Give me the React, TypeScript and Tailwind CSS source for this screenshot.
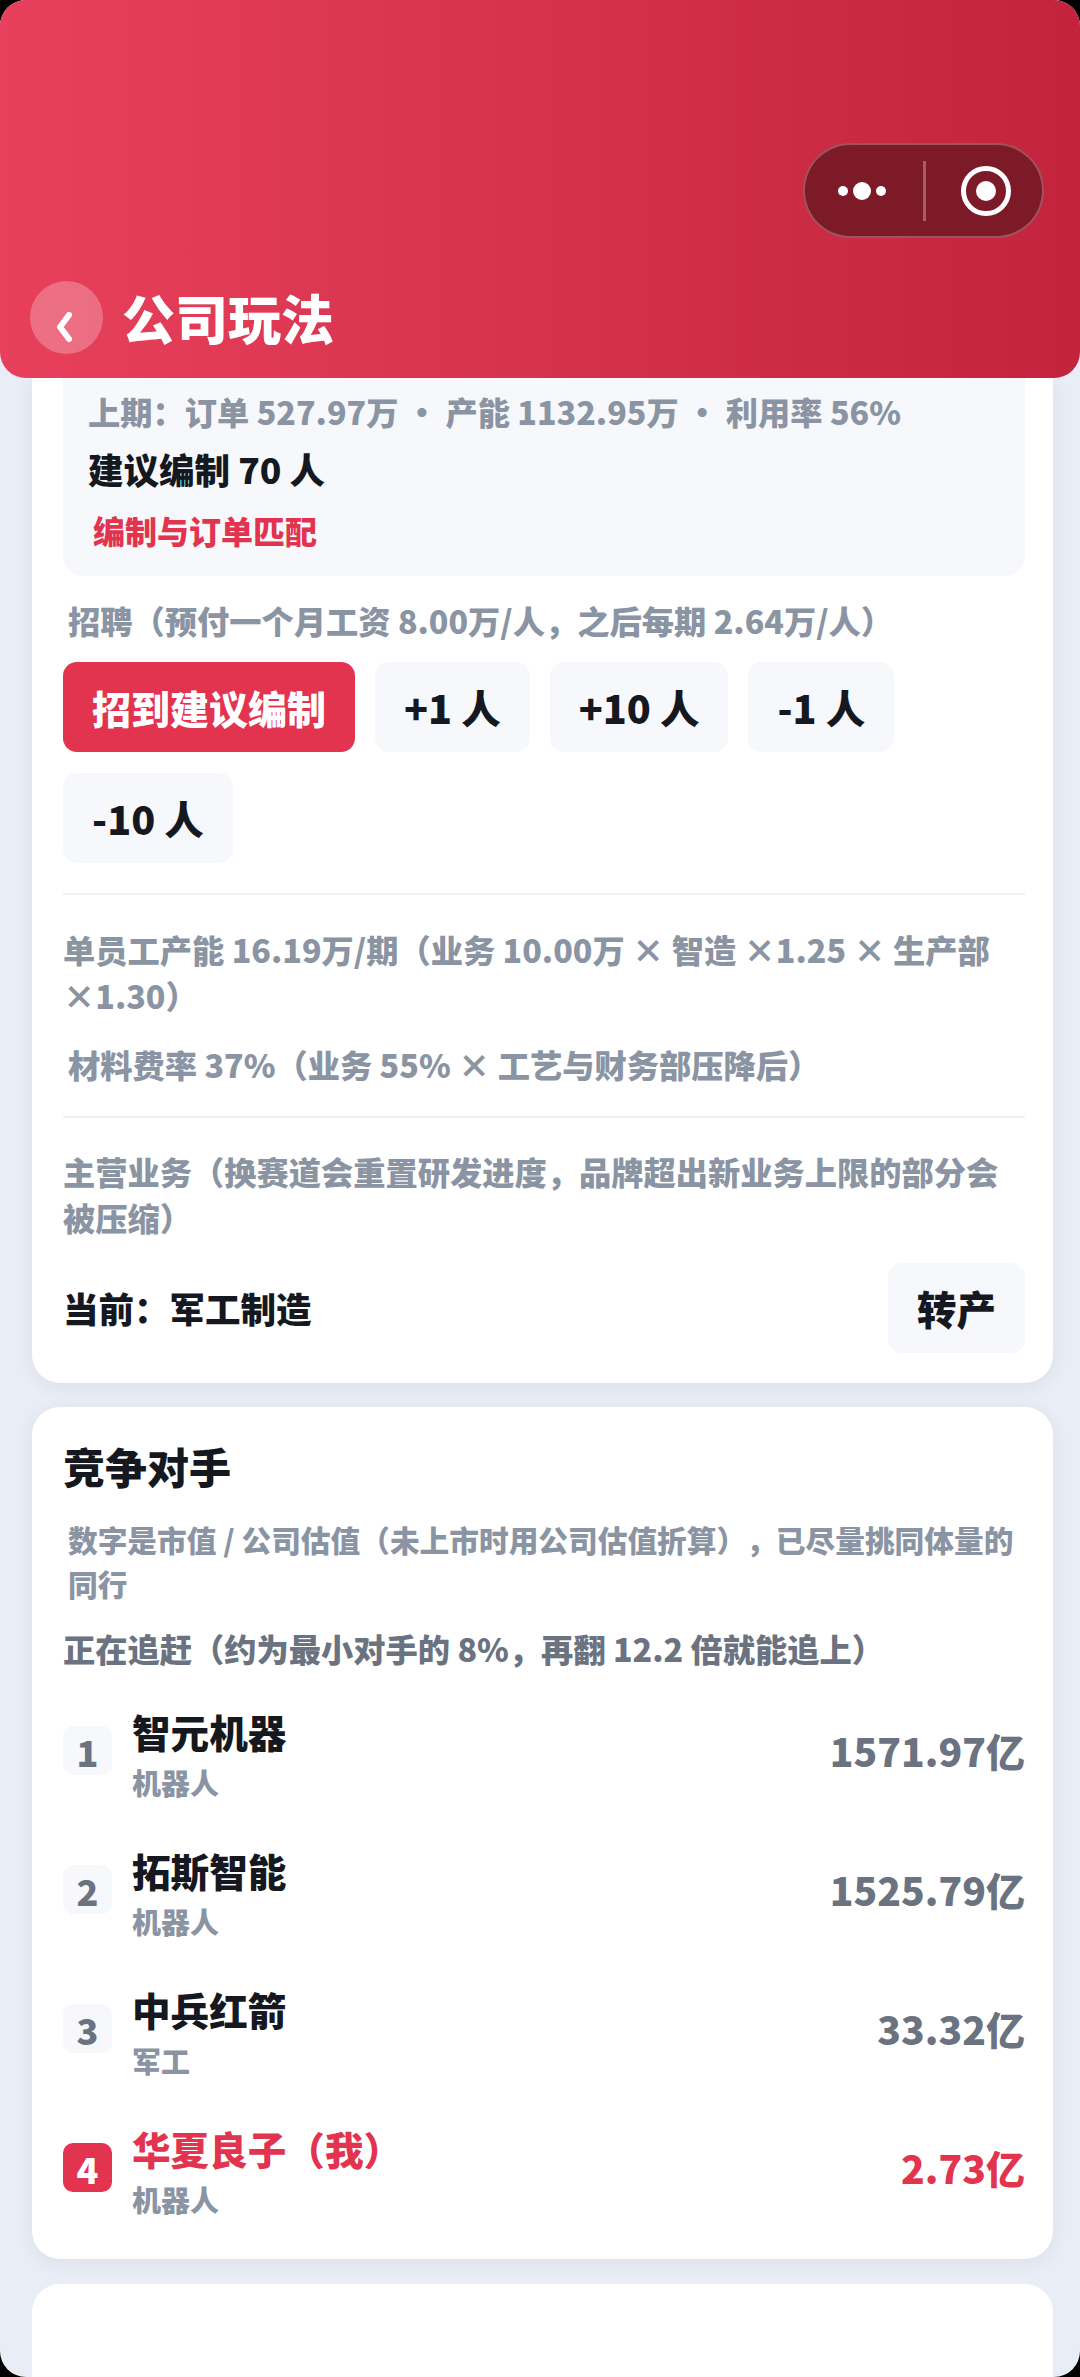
import React from 'react';

const font = { fontFamily: '"Noto Sans CJK SC", "Noto Sans", sans-serif' };

const rivals = [
  { rank: 1, name: '智元机器', kind: '机器人', value: '1571.97亿' },
  { rank: 2, name: '拓斯智能', kind: '机器人', value: '1525.79亿' },
  { rank: 3, name: '中兵红箭', kind: '军工', value: '33.32亿' },
  { rank: 4, name: '华夏良子（我）', kind: '机器人', value: '2.73亿', me: true },
];

const Btn = ({ children, primary = false }: { children: React.ReactNode; primary?: boolean }) => (
  <div
    className={`h-[90px] flex items-center rounded-[14px] font-black whitespace-nowrap ${
      primary ? 'px-[29px] text-[39px] bg-[#e2334f] text-white' : 'px-[29px] text-[39.5px] bg-[#f7f8fc] text-[#15181e]'
    }`}
  >
    {children}
  </div>
);

const Header = () => (
  <header className="relative z-10 shrink-0 h-[378px] rounded-b-[26px] bg-gradient-to-r from-[#e8405c] to-[#c3233c] flex items-end pb-[24px] pl-[30px]">
    <div className="w-[73px] h-[73px] rounded-full bg-white/25 flex items-center justify-center">
      <svg width="20" height="32" viewBox="0 0 20 32" className="mt-[18px] -ml-[4px]" fill="none">
        <polyline points="14,4 5,16 14,28" stroke="#fff" strokeWidth="6" strokeLinejoin="round" strokeLinecap="round" />
      </svg>
    </div>
    <h1 className="ml-[19px] text-[53px] leading-[73px] font-black text-white">公司玩法</h1>
    <div className="absolute left-[803px] top-[143px] w-[241px] h-[95px] rounded-full bg-[#7c1a28] border-2 border-white/25 flex items-center">
      <div className="w-[118px] flex items-center justify-center gap-[5px] pr-[4px]">
        <span className="w-[10px] h-[10px] rounded-full bg-white" />
        <span className="w-[18px] h-[18px] rounded-full bg-white" />
        <span className="w-[10px] h-[10px] rounded-full bg-white" />
      </div>
      <div className="w-[3px] h-[60px] bg-white/30" />
      <div className="flex-1 flex items-center justify-center pl-[4px]">
        <div className="w-[50px] h-[50px] rounded-full border-[5px] border-white flex items-center justify-center">
          <span className="w-[20px] h-[20px] rounded-full bg-white" />
        </div>
      </div>
    </div>
  </header>
);

const CompanyCard = () => (
  <section className="bg-white rounded-b-[28px] pl-[31px] pr-[28px] pb-[30px] shadow-[0_4px_16px_rgba(90,105,140,0.10)]">
    <div className="bg-[#f7f8fc] rounded-b-[20px] h-[198px] px-[25px] pt-[9px]">
      <p className="text-[32.25px] leading-[48px] font-black text-[#8a94a3]">上期：订单 527.97万 · 产能 1132.95万 · 利用率 56%</p>
      <p className="mt-[8px] text-[35.5px] leading-[52px] font-black text-[#15181e]">建议编制 70 人</p>
      <p className="mt-[12px] ml-[5px] text-[32px] leading-[46px] font-black text-[#e2334f]">编制与订单匹配</p>
    </div>
    <p className="mt-[21px] ml-[5px] text-[32.25px] leading-[46px] font-black text-[#8a94a3]">招聘（预付一个月工资 8.00万/人，之后每期 2.64万/人）</p>
    <div className="mt-[19px] flex flex-wrap gap-x-[20px] gap-y-[21px]">
      <Btn primary>招到建议编制</Btn>
      <Btn>+1 人</Btn>
      <Btn>+10 人</Btn>
      <Btn>-1 人</Btn>
      <Btn>-10 人</Btn>
    </div>
    <div className="mt-[30px] h-[2px] bg-[#eef0f4]" />
    <p className="mt-[31px] text-[32.25px] leading-[46px] font-black text-[#8a94a3]">单员工产能 16.19万/期（业务 10.00万 × 智造 ×1.25 × 生产部 ×1.30）</p>
    <p className="mt-[23px] ml-[5px] text-[32.25px] leading-[46px] font-black text-[#8a94a3]">材料费率 37%（业务 55% × 工艺与财务部压降后）</p>
    <div className="mt-[29px] h-[2px] bg-[#eef0f4]" />
    <p className="mt-[30px] text-[32.25px] leading-[46px] font-black text-[#8a94a3]">主营业务（换赛道会重置研发进度，品牌超出新业务上限的部分会被压缩）</p>
    <div className="mt-[23px] flex items-center justify-between">
      <span className="text-[35.5px] font-black text-[#15181e]">当前：军工制造</span>
      <Btn>转产</Btn>
    </div>
  </section>
);

const RivalsCard = () => (
  <section className="mt-[24px] h-[852px] bg-white rounded-[28px] pl-[31px] pr-[28px] pt-[29px] shadow-[0_4px_16px_rgba(90,105,140,0.10)]">
    <h2 className="text-[42px] leading-[60px] font-black text-[#15181e]">竞争对手</h2>
    <p className="mt-[22px] ml-[5px] text-[29.7px] leading-[44px] font-black text-[#8a94a3] [text-spacing-trim:space-all]">数字是市值 / 公司估值（未上市时用公司估值折算），已尽量挑同体量的同行</p>
    <p className="mt-[19px] text-[32.25px] leading-[46px] font-black text-[#6b7280]">正在追赶（约为最小对手的 8%，再翻 12.2 倍就能追上）</p>
    <div className="mt-[10px] flex flex-col">
      {rivals.map((r) => (
        <div key={r.rank} className="h-[139px] flex items-center">
          <div
            className={`w-[49px] h-[49px] rounded-[10px] flex items-center justify-center text-[36px] font-black ${
              r.me ? 'bg-[#e2334f] text-white' : 'bg-[#f7f8fc] text-[#6b7280]'
            }`}
          >
            {r.rank}
          </div>
          <div className="ml-[20px] flex-1">
            <div className={`text-[38.6px] leading-[62px] font-black ${r.me ? 'text-[#e2334f]' : 'text-[#15181e]'}`}>{r.name}</div>
            <div className="text-[29px] leading-[40px] font-black text-[#8a94a3]">{r.kind}</div>
          </div>
          <div className={`text-[39px] font-black ${r.me ? 'text-[#e2334f]' : 'text-[#6b7280]'}`}>{r.value}</div>
        </div>
      ))}
    </div>
  </section>
);

export default function App() {
  return (
    <div style={font} className="w-[1080px] h-[2377px] bg-black">
      <div className="h-full rounded-[26px] overflow-hidden bg-[#e9edf5] flex flex-col">
        <Header />
        <main className="pl-[32px] pr-[27px]">
          <CompanyCard />
          <RivalsCard />
          <section className="mt-[25px] h-[200px] bg-white rounded-[28px]" />
        </main>
      </div>
    </div>
  );
}
